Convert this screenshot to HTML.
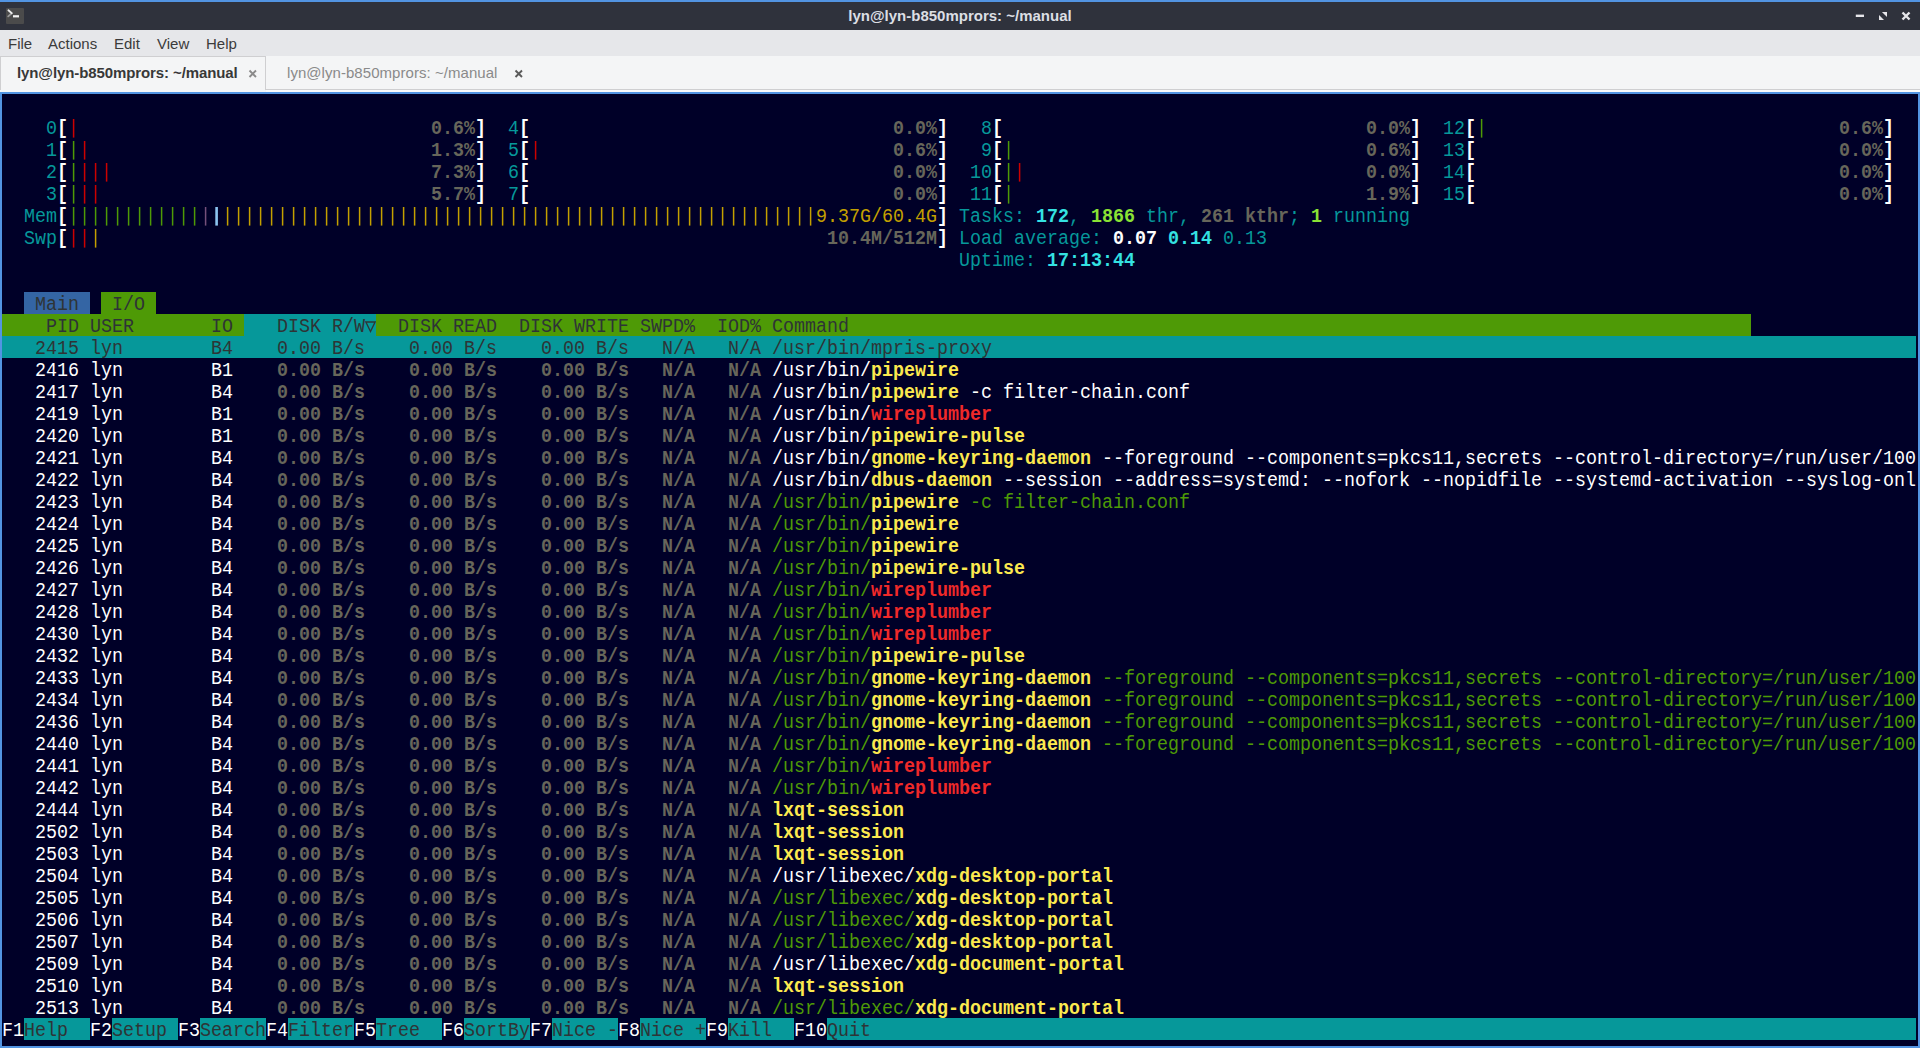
<!DOCTYPE html>
<html><head><meta charset="utf-8">
<style>
html,body{margin:0;padding:0;width:1920px;height:1048px;overflow:hidden;background:#5294e2;}
body{position:relative;font-family:"Liberation Sans",sans-serif;}
#title{position:absolute;left:0;top:2px;width:1920px;height:28px;background:#2f323c;}
#ttext{position:absolute;left:0;top:0;width:1920px;height:28px;line-height:28px;text-align:center;color:#dcdfe4;font-weight:bold;font-size:15px;}
#icon{position:absolute;left:6px;top:6px;width:18px;height:16px;background:#4b4b4b;border-radius:1px;}
#menu{position:absolute;left:0;top:30px;width:1920px;height:26px;background:#e6e7ea;}
.mi{position:absolute;top:0;height:26px;line-height:27px;font-size:15px;color:#3b3b3b;}
#tabs{position:absolute;left:0;top:56px;width:1920px;height:36px;background:#f4f5f6;}
#term{position:absolute;left:2px;top:94px;width:1916px;height:952px;background:#000028;}
#tw{position:absolute;left:0;top:0;width:1920px;height:1048px;font-family:"Liberation Mono",monospace;font-size:18.33px;}
#tw span{position:absolute;height:22px;line-height:22px;white-space:pre;transform:translateY(var(--dy)) scaleY(var(--sy));transform-origin:0 50%;}
#tw b{position:absolute;height:22px;}
#tw{--dy:2.5px;--sy:1.08}
#tw i{position:absolute;width:2px;height:18px;}
#tw i.bw{width:3px;left:0}
</style></head><body>
<div id="title">
  <div id="icon"><svg width="18" height="16" style="position:absolute;left:0;top:0"><path d="M2.2 8.4 L5.6 5.4" fill="none" stroke="#9a9a9a" stroke-width="1.8" stroke-linecap="round"/><path d="M2.4 2.3 L5.8 5.2" fill="none" stroke="#ececec" stroke-width="1.8" stroke-linecap="round"/><rect x="7" y="7.2" width="6" height="2.2" fill="#f4f4f4"/></svg></div>
  <div id="ttext">lyn@lyn-b850mprors: ~/manual</div>
  <svg style="position:absolute;left:1850px;top:0" width="70" height="28">
    <rect x="5.8" y="12.6" width="8.2" height="2.4" fill="#e6e6ea"/>
    <path d="M31.9 9.9 L37 9.9 L37 15 Z" fill="#e6e6ea"/>
    <path d="M29 13 L34 18 L29 18 Z" fill="#e6e6ea"/>
    <path d="M52.5 10.5 L59.5 17.5 M59.5 10.5 L52.5 17.5" stroke="#e6e6ea" stroke-width="2.4"/>
  </svg>
</div>
<div id="menu">
  <div class="mi" style="left:8px">File</div>
  <div class="mi" style="left:48px">Actions</div>
  <div class="mi" style="left:114px">Edit</div>
  <div class="mi" style="left:157px">View</div>
  <div class="mi" style="left:206px">Help</div>
</div>
<div id="tabs">
  <div style="position:absolute;left:0;top:34px;width:266px;height:2px;background:#f6f7f8"></div>
  <div style="position:absolute;left:0;top:0;width:266px;height:34px;background:#f4f5f6;border-top:1px solid #cfcfd1;border-left:1px solid #cfcfd1;border-right:1px solid #cfcfd1;box-sizing:border-box;border-bottom:0"></div>
  <div style="position:absolute;left:265px;top:33px;width:1655px;height:1px;background:#cfcfd1"></div>
  <div style="position:absolute;left:266px;top:34px;width:1654px;height:2px;background:#fbfbfb"></div>
  <div style="position:absolute;left:265px;top:34px;width:1px;height:2px;background:#f4f5f6"></div>
  <div style="position:absolute;left:17px;top:-1px;height:36px;line-height:36px;font-size:15px;font-weight:bold;color:#383838;letter-spacing:-0.1px">lyn@lyn-b850mprors: ~/manual</div>
  <svg style="position:absolute;left:240px;top:0" width="30" height="36"><path d="M9.5 14.5 L16 21 M16 14.5 L9.5 21" stroke="#8a8a8a" stroke-width="1.9"/></svg>
  <div style="position:absolute;left:287px;top:-1px;height:36px;line-height:36px;font-size:15px;color:#8a8a8a;letter-spacing:0.05px">lyn@lyn-b850mprors: ~/manual</div>
  <svg style="position:absolute;left:505px;top:0" width="30" height="36"><path d="M10.5 14.5 L17 21 M17 14.5 L10.5 21" stroke="#5a5a5a" stroke-width="1.9"/></svg>
</div>
<div id="term"></div>
<div id="tw">
<b style="left:24px;top:292px;width:66px;background:#3465a4"></b>
<b style="left:101px;top:292px;width:55px;background:#4e9a06"></b>
<b style="left:2px;top:314px;width:242px;background:#4e9a06"></b>
<b style="left:244px;top:314px;width:132px;background:#06989a"></b>
<b style="left:376px;top:314px;width:1375px;background:#4e9a06"></b>
<b style="left:2px;top:336px;width:1914px;background:#06989a"></b>
<b style="left:24px;top:1018px;width:66px;background:#06989a"></b>
<b style="left:112px;top:1018px;width:66px;background:#06989a"></b>
<b style="left:200px;top:1018px;width:66px;background:#06989a"></b>
<b style="left:288px;top:1018px;width:66px;background:#06989a"></b>
<b style="left:376px;top:1018px;width:66px;background:#06989a"></b>
<b style="left:464px;top:1018px;width:66px;background:#06989a"></b>
<b style="left:552px;top:1018px;width:66px;background:#06989a"></b>
<b style="left:640px;top:1018px;width:66px;background:#06989a"></b>
<b style="left:728px;top:1018px;width:66px;background:#06989a"></b>
<b style="left:827px;top:1018px;width:1089px;background:#06989a"></b>
<svg style="position:absolute;left:0;top:0" width="1920" height="300"><rect x="72.85" y="119" width="1.5" height="18.6" fill="#cc0000"/><rect x="72.85" y="141" width="1.5" height="18.6" fill="#4e9a06"/><rect x="83.85" y="141" width="1.5" height="18.6" fill="#cc0000"/><rect x="72.85" y="163" width="1.5" height="18.6" fill="#4e9a06"/><rect x="83.85" y="163" width="1.5" height="18.6" fill="#cc0000"/><rect x="94.85" y="163" width="1.5" height="18.6" fill="#cc0000"/><rect x="105.85" y="163" width="1.5" height="18.6" fill="#cc0000"/><rect x="72.85" y="185" width="1.5" height="18.6" fill="#4e9a06"/><rect x="83.85" y="185" width="1.5" height="18.6" fill="#cc0000"/><rect x="94.85" y="185" width="1.5" height="18.6" fill="#cc0000"/><rect x="534.85" y="141" width="1.5" height="18.6" fill="#cc0000"/><rect x="1007.85" y="141" width="1.5" height="18.6" fill="#4e9a06"/><rect x="1007.85" y="163" width="1.5" height="18.6" fill="#4e9a06"/><rect x="1018.85" y="163" width="1.5" height="18.6" fill="#cc0000"/><rect x="1007.85" y="185" width="1.5" height="18.6" fill="#4e9a06"/><rect x="1480.85" y="119" width="1.5" height="18.6" fill="#4e9a06"/><rect x="72.85" y="207" width="1.5" height="18.6" fill="#4e9a06"/><rect x="83.85" y="207" width="1.5" height="18.6" fill="#4e9a06"/><rect x="94.85" y="207" width="1.5" height="18.6" fill="#4e9a06"/><rect x="105.85" y="207" width="1.5" height="18.6" fill="#4e9a06"/><rect x="116.85" y="207" width="1.5" height="18.6" fill="#4e9a06"/><rect x="127.85" y="207" width="1.5" height="18.6" fill="#4e9a06"/><rect x="138.85" y="207" width="1.5" height="18.6" fill="#4e9a06"/><rect x="149.85" y="207" width="1.5" height="18.6" fill="#4e9a06"/><rect x="160.85" y="207" width="1.5" height="18.6" fill="#4e9a06"/><rect x="171.85" y="207" width="1.5" height="18.6" fill="#4e9a06"/><rect x="182.85" y="207" width="1.5" height="18.6" fill="#4e9a06"/><rect x="193.85" y="207" width="1.5" height="18.6" fill="#4e9a06"/><rect x="204.85" y="207" width="1.5" height="18.6" fill="#75507b"/><rect x="215.30" y="207" width="2.6" height="18.6" fill="#8cc4f0"/><rect x="226.85" y="207" width="1.5" height="18.6" fill="#c4a000"/><rect x="237.85" y="207" width="1.5" height="18.6" fill="#c4a000"/><rect x="248.85" y="207" width="1.5" height="18.6" fill="#c4a000"/><rect x="259.85" y="207" width="1.5" height="18.6" fill="#c4a000"/><rect x="270.85" y="207" width="1.5" height="18.6" fill="#c4a000"/><rect x="281.85" y="207" width="1.5" height="18.6" fill="#c4a000"/><rect x="292.85" y="207" width="1.5" height="18.6" fill="#c4a000"/><rect x="303.85" y="207" width="1.5" height="18.6" fill="#c4a000"/><rect x="314.85" y="207" width="1.5" height="18.6" fill="#c4a000"/><rect x="325.85" y="207" width="1.5" height="18.6" fill="#c4a000"/><rect x="336.85" y="207" width="1.5" height="18.6" fill="#c4a000"/><rect x="347.85" y="207" width="1.5" height="18.6" fill="#c4a000"/><rect x="358.85" y="207" width="1.5" height="18.6" fill="#c4a000"/><rect x="369.85" y="207" width="1.5" height="18.6" fill="#c4a000"/><rect x="380.85" y="207" width="1.5" height="18.6" fill="#c4a000"/><rect x="391.85" y="207" width="1.5" height="18.6" fill="#c4a000"/><rect x="402.85" y="207" width="1.5" height="18.6" fill="#c4a000"/><rect x="413.85" y="207" width="1.5" height="18.6" fill="#c4a000"/><rect x="424.85" y="207" width="1.5" height="18.6" fill="#c4a000"/><rect x="435.85" y="207" width="1.5" height="18.6" fill="#c4a000"/><rect x="446.85" y="207" width="1.5" height="18.6" fill="#c4a000"/><rect x="457.85" y="207" width="1.5" height="18.6" fill="#c4a000"/><rect x="468.85" y="207" width="1.5" height="18.6" fill="#c4a000"/><rect x="479.85" y="207" width="1.5" height="18.6" fill="#c4a000"/><rect x="490.85" y="207" width="1.5" height="18.6" fill="#c4a000"/><rect x="501.85" y="207" width="1.5" height="18.6" fill="#c4a000"/><rect x="512.85" y="207" width="1.5" height="18.6" fill="#c4a000"/><rect x="523.85" y="207" width="1.5" height="18.6" fill="#c4a000"/><rect x="534.85" y="207" width="1.5" height="18.6" fill="#c4a000"/><rect x="545.85" y="207" width="1.5" height="18.6" fill="#c4a000"/><rect x="556.85" y="207" width="1.5" height="18.6" fill="#c4a000"/><rect x="567.85" y="207" width="1.5" height="18.6" fill="#c4a000"/><rect x="578.85" y="207" width="1.5" height="18.6" fill="#c4a000"/><rect x="589.85" y="207" width="1.5" height="18.6" fill="#c4a000"/><rect x="600.85" y="207" width="1.5" height="18.6" fill="#c4a000"/><rect x="611.85" y="207" width="1.5" height="18.6" fill="#c4a000"/><rect x="622.85" y="207" width="1.5" height="18.6" fill="#c4a000"/><rect x="633.85" y="207" width="1.5" height="18.6" fill="#c4a000"/><rect x="644.85" y="207" width="1.5" height="18.6" fill="#c4a000"/><rect x="655.85" y="207" width="1.5" height="18.6" fill="#c4a000"/><rect x="666.85" y="207" width="1.5" height="18.6" fill="#c4a000"/><rect x="677.85" y="207" width="1.5" height="18.6" fill="#c4a000"/><rect x="688.85" y="207" width="1.5" height="18.6" fill="#c4a000"/><rect x="699.85" y="207" width="1.5" height="18.6" fill="#c4a000"/><rect x="710.85" y="207" width="1.5" height="18.6" fill="#c4a000"/><rect x="721.85" y="207" width="1.5" height="18.6" fill="#c4a000"/><rect x="732.85" y="207" width="1.5" height="18.6" fill="#c4a000"/><rect x="743.85" y="207" width="1.5" height="18.6" fill="#c4a000"/><rect x="754.85" y="207" width="1.5" height="18.6" fill="#c4a000"/><rect x="765.85" y="207" width="1.5" height="18.6" fill="#c4a000"/><rect x="776.85" y="207" width="1.5" height="18.6" fill="#c4a000"/><rect x="787.85" y="207" width="1.5" height="18.6" fill="#c4a000"/><rect x="798.85" y="207" width="1.5" height="18.6" fill="#c4a000"/><rect x="809.85" y="207" width="1.5" height="18.6" fill="#c4a000"/><rect x="72.85" y="229" width="1.5" height="18.6" fill="#cc0000"/><rect x="83.85" y="229" width="1.5" height="18.6" fill="#cc0000"/><rect x="94.85" y="229" width="1.5" height="18.6" fill="#c4a000"/></svg>
<span style="left:24px;top:116px;color:#06989a">  0</span>
<span style="left:57px;top:116px;color:#ffffff;font-weight:bold">[</span>
<span style="left:431px;top:116px;color:#67665a;font-weight:bold">0.6%</span>
<span style="left:475px;top:116px;color:#ffffff;font-weight:bold">]</span>
<span style="left:486px;top:116px;color:#06989a">  4</span>
<span style="left:519px;top:116px;color:#ffffff;font-weight:bold">[</span>
<span style="left:893px;top:116px;color:#67665a;font-weight:bold">0.0%</span>
<span style="left:937px;top:116px;color:#ffffff;font-weight:bold">]</span>
<span style="left:959px;top:116px;color:#06989a">  8</span>
<span style="left:992px;top:116px;color:#ffffff;font-weight:bold">[</span>
<span style="left:1366px;top:116px;color:#67665a;font-weight:bold">0.0%</span>
<span style="left:1410px;top:116px;color:#ffffff;font-weight:bold">]</span>
<span style="left:1432px;top:116px;color:#06989a"> 12</span>
<span style="left:1465px;top:116px;color:#ffffff;font-weight:bold">[</span>
<span style="left:1839px;top:116px;color:#67665a;font-weight:bold">0.6%</span>
<span style="left:1883px;top:116px;color:#ffffff;font-weight:bold">]</span>
<span style="left:24px;top:138px;color:#06989a">  1</span>
<span style="left:57px;top:138px;color:#ffffff;font-weight:bold">[</span>
<span style="left:431px;top:138px;color:#67665a;font-weight:bold">1.3%</span>
<span style="left:475px;top:138px;color:#ffffff;font-weight:bold">]</span>
<span style="left:486px;top:138px;color:#06989a">  5</span>
<span style="left:519px;top:138px;color:#ffffff;font-weight:bold">[</span>
<span style="left:893px;top:138px;color:#67665a;font-weight:bold">0.6%</span>
<span style="left:937px;top:138px;color:#ffffff;font-weight:bold">]</span>
<span style="left:959px;top:138px;color:#06989a">  9</span>
<span style="left:992px;top:138px;color:#ffffff;font-weight:bold">[</span>
<span style="left:1366px;top:138px;color:#67665a;font-weight:bold">0.6%</span>
<span style="left:1410px;top:138px;color:#ffffff;font-weight:bold">]</span>
<span style="left:1432px;top:138px;color:#06989a"> 13</span>
<span style="left:1465px;top:138px;color:#ffffff;font-weight:bold">[</span>
<span style="left:1839px;top:138px;color:#67665a;font-weight:bold">0.0%</span>
<span style="left:1883px;top:138px;color:#ffffff;font-weight:bold">]</span>
<span style="left:24px;top:160px;color:#06989a">  2</span>
<span style="left:57px;top:160px;color:#ffffff;font-weight:bold">[</span>
<span style="left:431px;top:160px;color:#67665a;font-weight:bold">7.3%</span>
<span style="left:475px;top:160px;color:#ffffff;font-weight:bold">]</span>
<span style="left:486px;top:160px;color:#06989a">  6</span>
<span style="left:519px;top:160px;color:#ffffff;font-weight:bold">[</span>
<span style="left:893px;top:160px;color:#67665a;font-weight:bold">0.0%</span>
<span style="left:937px;top:160px;color:#ffffff;font-weight:bold">]</span>
<span style="left:959px;top:160px;color:#06989a"> 10</span>
<span style="left:992px;top:160px;color:#ffffff;font-weight:bold">[</span>
<span style="left:1366px;top:160px;color:#67665a;font-weight:bold">0.0%</span>
<span style="left:1410px;top:160px;color:#ffffff;font-weight:bold">]</span>
<span style="left:1432px;top:160px;color:#06989a"> 14</span>
<span style="left:1465px;top:160px;color:#ffffff;font-weight:bold">[</span>
<span style="left:1839px;top:160px;color:#67665a;font-weight:bold">0.0%</span>
<span style="left:1883px;top:160px;color:#ffffff;font-weight:bold">]</span>
<span style="left:24px;top:182px;color:#06989a">  3</span>
<span style="left:57px;top:182px;color:#ffffff;font-weight:bold">[</span>
<span style="left:431px;top:182px;color:#67665a;font-weight:bold">5.7%</span>
<span style="left:475px;top:182px;color:#ffffff;font-weight:bold">]</span>
<span style="left:486px;top:182px;color:#06989a">  7</span>
<span style="left:519px;top:182px;color:#ffffff;font-weight:bold">[</span>
<span style="left:893px;top:182px;color:#67665a;font-weight:bold">0.0%</span>
<span style="left:937px;top:182px;color:#ffffff;font-weight:bold">]</span>
<span style="left:959px;top:182px;color:#06989a"> 11</span>
<span style="left:992px;top:182px;color:#ffffff;font-weight:bold">[</span>
<span style="left:1366px;top:182px;color:#67665a;font-weight:bold">1.9%</span>
<span style="left:1410px;top:182px;color:#ffffff;font-weight:bold">]</span>
<span style="left:1432px;top:182px;color:#06989a"> 15</span>
<span style="left:1465px;top:182px;color:#ffffff;font-weight:bold">[</span>
<span style="left:1839px;top:182px;color:#67665a;font-weight:bold">0.0%</span>
<span style="left:1883px;top:182px;color:#ffffff;font-weight:bold">]</span>
<span style="left:24px;top:204px;color:#06989a">Mem</span>
<span style="left:57px;top:204px;color:#ffffff;font-weight:bold">[</span>
<span style="left:816px;top:204px;color:#c4a000">9.37G/60.4G</span>
<span style="left:937px;top:204px;color:#ffffff;font-weight:bold">]</span>
<span style="left:959px;top:204px;color:#06989a">Tasks:</span>
<span style="left:1036px;top:204px;color:#34e2e2;font-weight:bold">172</span>
<span style="left:1069px;top:204px;color:#06989a">,</span>
<span style="left:1091px;top:204px;color:#8ae234;font-weight:bold">1866</span>
<span style="left:1135px;top:204px;color:#06989a"> thr,</span>
<span style="left:1201px;top:204px;color:#67665a;font-weight:bold">261</span>
<span style="left:1234px;top:204px;color:#67665a;font-weight:bold"> kthr</span>
<span style="left:1289px;top:204px;color:#06989a">;</span>
<span style="left:1311px;top:204px;color:#8ae234;font-weight:bold">1</span>
<span style="left:1322px;top:204px;color:#06989a"> running</span>
<span style="left:24px;top:226px;color:#06989a">Swp</span>
<span style="left:57px;top:226px;color:#ffffff;font-weight:bold">[</span>
<span style="left:827px;top:226px;color:#67665a;font-weight:bold">10.4M/512M</span>
<span style="left:937px;top:226px;color:#ffffff;font-weight:bold">]</span>
<span style="left:959px;top:226px;color:#06989a">Load average:</span>
<span style="left:1113px;top:226px;color:#ffffff;font-weight:bold">0.07</span>
<span style="left:1168px;top:226px;color:#34e2e2;font-weight:bold">0.14</span>
<span style="left:1223px;top:226px;color:#06989a">0.13</span>
<span style="left:959px;top:248px;color:#06989a">Uptime:</span>
<span style="left:1047px;top:248px;color:#34e2e2;font-weight:bold">17:13:44</span>
<span style="left:24px;top:292px;color:#2e3436"> Main</span>
<span style="left:101px;top:292px;color:#2e3436"> I/O</span>
<span style="left:2px;top:314px;color:#2e3436">    PID USER       IO</span>
<span style="left:244px;top:314px;color:#2e3436">   DISK R/W</span>
<span style="left:376px;top:314px;color:#2e3436">  DISK READ  DISK WRITE SWPD%  IOD% Command</span>
<span style="left:2px;top:336px;color:#2e3436">   2415 lyn        B4    0.00 B/s    0.00 B/s    0.00 B/s   N/A   N/A /usr/bin/mpris-proxy</span>
<span style="left:2px;top:358px;color:#ffffff">   2416 lyn</span>
<span style="left:211px;top:358px;color:#ffffff">B1</span>
<span style="left:277px;top:358px;color:#67665a;font-weight:bold">0.00 B/s</span>
<span style="left:409px;top:358px;color:#67665a;font-weight:bold">0.00 B/s</span>
<span style="left:541px;top:358px;color:#67665a;font-weight:bold">0.00 B/s</span>
<span style="left:662px;top:358px;color:#67665a;font-weight:bold">N/A</span>
<span style="left:728px;top:358px;color:#67665a;font-weight:bold">N/A</span>
<span style="left:772px;top:358px;color:#ffffff">/usr/bin/</span>
<span style="left:871px;top:358px;color:#fce94f;font-weight:bold">pipewire</span>
<span style="left:2px;top:380px;color:#ffffff">   2417 lyn</span>
<span style="left:211px;top:380px;color:#ffffff">B4</span>
<span style="left:277px;top:380px;color:#67665a;font-weight:bold">0.00 B/s</span>
<span style="left:409px;top:380px;color:#67665a;font-weight:bold">0.00 B/s</span>
<span style="left:541px;top:380px;color:#67665a;font-weight:bold">0.00 B/s</span>
<span style="left:662px;top:380px;color:#67665a;font-weight:bold">N/A</span>
<span style="left:728px;top:380px;color:#67665a;font-weight:bold">N/A</span>
<span style="left:772px;top:380px;color:#ffffff">/usr/bin/</span>
<span style="left:871px;top:380px;color:#fce94f;font-weight:bold">pipewire</span>
<span style="left:959px;top:380px;color:#ffffff"> -c filter-chain.conf</span>
<span style="left:2px;top:402px;color:#ffffff">   2419 lyn</span>
<span style="left:211px;top:402px;color:#ffffff">B1</span>
<span style="left:277px;top:402px;color:#67665a;font-weight:bold">0.00 B/s</span>
<span style="left:409px;top:402px;color:#67665a;font-weight:bold">0.00 B/s</span>
<span style="left:541px;top:402px;color:#67665a;font-weight:bold">0.00 B/s</span>
<span style="left:662px;top:402px;color:#67665a;font-weight:bold">N/A</span>
<span style="left:728px;top:402px;color:#67665a;font-weight:bold">N/A</span>
<span style="left:772px;top:402px;color:#ffffff">/usr/bin/</span>
<span style="left:871px;top:402px;color:#ef2929;font-weight:bold">wireplumber</span>
<span style="left:2px;top:424px;color:#ffffff">   2420 lyn</span>
<span style="left:211px;top:424px;color:#ffffff">B1</span>
<span style="left:277px;top:424px;color:#67665a;font-weight:bold">0.00 B/s</span>
<span style="left:409px;top:424px;color:#67665a;font-weight:bold">0.00 B/s</span>
<span style="left:541px;top:424px;color:#67665a;font-weight:bold">0.00 B/s</span>
<span style="left:662px;top:424px;color:#67665a;font-weight:bold">N/A</span>
<span style="left:728px;top:424px;color:#67665a;font-weight:bold">N/A</span>
<span style="left:772px;top:424px;color:#ffffff">/usr/bin/</span>
<span style="left:871px;top:424px;color:#fce94f;font-weight:bold">pipewire-pulse</span>
<span style="left:2px;top:446px;color:#ffffff">   2421 lyn</span>
<span style="left:211px;top:446px;color:#ffffff">B4</span>
<span style="left:277px;top:446px;color:#67665a;font-weight:bold">0.00 B/s</span>
<span style="left:409px;top:446px;color:#67665a;font-weight:bold">0.00 B/s</span>
<span style="left:541px;top:446px;color:#67665a;font-weight:bold">0.00 B/s</span>
<span style="left:662px;top:446px;color:#67665a;font-weight:bold">N/A</span>
<span style="left:728px;top:446px;color:#67665a;font-weight:bold">N/A</span>
<span style="left:772px;top:446px;color:#ffffff">/usr/bin/</span>
<span style="left:871px;top:446px;color:#fce94f;font-weight:bold">gnome-keyring-daemon</span>
<span style="left:1091px;top:446px;color:#ffffff"> --foreground --components=pkcs11,secrets --control-directory=/run/user/100</span>
<span style="left:2px;top:468px;color:#ffffff">   2422 lyn</span>
<span style="left:211px;top:468px;color:#ffffff">B4</span>
<span style="left:277px;top:468px;color:#67665a;font-weight:bold">0.00 B/s</span>
<span style="left:409px;top:468px;color:#67665a;font-weight:bold">0.00 B/s</span>
<span style="left:541px;top:468px;color:#67665a;font-weight:bold">0.00 B/s</span>
<span style="left:662px;top:468px;color:#67665a;font-weight:bold">N/A</span>
<span style="left:728px;top:468px;color:#67665a;font-weight:bold">N/A</span>
<span style="left:772px;top:468px;color:#ffffff">/usr/bin/</span>
<span style="left:871px;top:468px;color:#fce94f;font-weight:bold">dbus-daemon</span>
<span style="left:992px;top:468px;color:#ffffff"> --session --address=systemd: --nofork --nopidfile --systemd-activation --syslog-onl</span>
<span style="left:2px;top:490px;color:#ffffff">   2423 lyn</span>
<span style="left:211px;top:490px;color:#ffffff">B4</span>
<span style="left:277px;top:490px;color:#67665a;font-weight:bold">0.00 B/s</span>
<span style="left:409px;top:490px;color:#67665a;font-weight:bold">0.00 B/s</span>
<span style="left:541px;top:490px;color:#67665a;font-weight:bold">0.00 B/s</span>
<span style="left:662px;top:490px;color:#67665a;font-weight:bold">N/A</span>
<span style="left:728px;top:490px;color:#67665a;font-weight:bold">N/A</span>
<span style="left:772px;top:490px;color:#4e9a06">/usr/bin/</span>
<span style="left:871px;top:490px;color:#fce94f;font-weight:bold">pipewire</span>
<span style="left:959px;top:490px;color:#4e9a06"> -c filter-chain.conf</span>
<span style="left:2px;top:512px;color:#ffffff">   2424 lyn</span>
<span style="left:211px;top:512px;color:#ffffff">B4</span>
<span style="left:277px;top:512px;color:#67665a;font-weight:bold">0.00 B/s</span>
<span style="left:409px;top:512px;color:#67665a;font-weight:bold">0.00 B/s</span>
<span style="left:541px;top:512px;color:#67665a;font-weight:bold">0.00 B/s</span>
<span style="left:662px;top:512px;color:#67665a;font-weight:bold">N/A</span>
<span style="left:728px;top:512px;color:#67665a;font-weight:bold">N/A</span>
<span style="left:772px;top:512px;color:#4e9a06">/usr/bin/</span>
<span style="left:871px;top:512px;color:#fce94f;font-weight:bold">pipewire</span>
<span style="left:2px;top:534px;color:#ffffff">   2425 lyn</span>
<span style="left:211px;top:534px;color:#ffffff">B4</span>
<span style="left:277px;top:534px;color:#67665a;font-weight:bold">0.00 B/s</span>
<span style="left:409px;top:534px;color:#67665a;font-weight:bold">0.00 B/s</span>
<span style="left:541px;top:534px;color:#67665a;font-weight:bold">0.00 B/s</span>
<span style="left:662px;top:534px;color:#67665a;font-weight:bold">N/A</span>
<span style="left:728px;top:534px;color:#67665a;font-weight:bold">N/A</span>
<span style="left:772px;top:534px;color:#4e9a06">/usr/bin/</span>
<span style="left:871px;top:534px;color:#fce94f;font-weight:bold">pipewire</span>
<span style="left:2px;top:556px;color:#ffffff">   2426 lyn</span>
<span style="left:211px;top:556px;color:#ffffff">B4</span>
<span style="left:277px;top:556px;color:#67665a;font-weight:bold">0.00 B/s</span>
<span style="left:409px;top:556px;color:#67665a;font-weight:bold">0.00 B/s</span>
<span style="left:541px;top:556px;color:#67665a;font-weight:bold">0.00 B/s</span>
<span style="left:662px;top:556px;color:#67665a;font-weight:bold">N/A</span>
<span style="left:728px;top:556px;color:#67665a;font-weight:bold">N/A</span>
<span style="left:772px;top:556px;color:#4e9a06">/usr/bin/</span>
<span style="left:871px;top:556px;color:#fce94f;font-weight:bold">pipewire-pulse</span>
<span style="left:2px;top:578px;color:#ffffff">   2427 lyn</span>
<span style="left:211px;top:578px;color:#ffffff">B4</span>
<span style="left:277px;top:578px;color:#67665a;font-weight:bold">0.00 B/s</span>
<span style="left:409px;top:578px;color:#67665a;font-weight:bold">0.00 B/s</span>
<span style="left:541px;top:578px;color:#67665a;font-weight:bold">0.00 B/s</span>
<span style="left:662px;top:578px;color:#67665a;font-weight:bold">N/A</span>
<span style="left:728px;top:578px;color:#67665a;font-weight:bold">N/A</span>
<span style="left:772px;top:578px;color:#4e9a06">/usr/bin/</span>
<span style="left:871px;top:578px;color:#ef2929;font-weight:bold">wireplumber</span>
<span style="left:2px;top:600px;color:#ffffff">   2428 lyn</span>
<span style="left:211px;top:600px;color:#ffffff">B4</span>
<span style="left:277px;top:600px;color:#67665a;font-weight:bold">0.00 B/s</span>
<span style="left:409px;top:600px;color:#67665a;font-weight:bold">0.00 B/s</span>
<span style="left:541px;top:600px;color:#67665a;font-weight:bold">0.00 B/s</span>
<span style="left:662px;top:600px;color:#67665a;font-weight:bold">N/A</span>
<span style="left:728px;top:600px;color:#67665a;font-weight:bold">N/A</span>
<span style="left:772px;top:600px;color:#4e9a06">/usr/bin/</span>
<span style="left:871px;top:600px;color:#ef2929;font-weight:bold">wireplumber</span>
<span style="left:2px;top:622px;color:#ffffff">   2430 lyn</span>
<span style="left:211px;top:622px;color:#ffffff">B4</span>
<span style="left:277px;top:622px;color:#67665a;font-weight:bold">0.00 B/s</span>
<span style="left:409px;top:622px;color:#67665a;font-weight:bold">0.00 B/s</span>
<span style="left:541px;top:622px;color:#67665a;font-weight:bold">0.00 B/s</span>
<span style="left:662px;top:622px;color:#67665a;font-weight:bold">N/A</span>
<span style="left:728px;top:622px;color:#67665a;font-weight:bold">N/A</span>
<span style="left:772px;top:622px;color:#4e9a06">/usr/bin/</span>
<span style="left:871px;top:622px;color:#ef2929;font-weight:bold">wireplumber</span>
<span style="left:2px;top:644px;color:#ffffff">   2432 lyn</span>
<span style="left:211px;top:644px;color:#ffffff">B4</span>
<span style="left:277px;top:644px;color:#67665a;font-weight:bold">0.00 B/s</span>
<span style="left:409px;top:644px;color:#67665a;font-weight:bold">0.00 B/s</span>
<span style="left:541px;top:644px;color:#67665a;font-weight:bold">0.00 B/s</span>
<span style="left:662px;top:644px;color:#67665a;font-weight:bold">N/A</span>
<span style="left:728px;top:644px;color:#67665a;font-weight:bold">N/A</span>
<span style="left:772px;top:644px;color:#4e9a06">/usr/bin/</span>
<span style="left:871px;top:644px;color:#fce94f;font-weight:bold">pipewire-pulse</span>
<span style="left:2px;top:666px;color:#ffffff">   2433 lyn</span>
<span style="left:211px;top:666px;color:#ffffff">B4</span>
<span style="left:277px;top:666px;color:#67665a;font-weight:bold">0.00 B/s</span>
<span style="left:409px;top:666px;color:#67665a;font-weight:bold">0.00 B/s</span>
<span style="left:541px;top:666px;color:#67665a;font-weight:bold">0.00 B/s</span>
<span style="left:662px;top:666px;color:#67665a;font-weight:bold">N/A</span>
<span style="left:728px;top:666px;color:#67665a;font-weight:bold">N/A</span>
<span style="left:772px;top:666px;color:#4e9a06">/usr/bin/</span>
<span style="left:871px;top:666px;color:#fce94f;font-weight:bold">gnome-keyring-daemon</span>
<span style="left:1091px;top:666px;color:#4e9a06"> --foreground --components=pkcs11,secrets --control-directory=/run/user/100</span>
<span style="left:2px;top:688px;color:#ffffff">   2434 lyn</span>
<span style="left:211px;top:688px;color:#ffffff">B4</span>
<span style="left:277px;top:688px;color:#67665a;font-weight:bold">0.00 B/s</span>
<span style="left:409px;top:688px;color:#67665a;font-weight:bold">0.00 B/s</span>
<span style="left:541px;top:688px;color:#67665a;font-weight:bold">0.00 B/s</span>
<span style="left:662px;top:688px;color:#67665a;font-weight:bold">N/A</span>
<span style="left:728px;top:688px;color:#67665a;font-weight:bold">N/A</span>
<span style="left:772px;top:688px;color:#4e9a06">/usr/bin/</span>
<span style="left:871px;top:688px;color:#fce94f;font-weight:bold">gnome-keyring-daemon</span>
<span style="left:1091px;top:688px;color:#4e9a06"> --foreground --components=pkcs11,secrets --control-directory=/run/user/100</span>
<span style="left:2px;top:710px;color:#ffffff">   2436 lyn</span>
<span style="left:211px;top:710px;color:#ffffff">B4</span>
<span style="left:277px;top:710px;color:#67665a;font-weight:bold">0.00 B/s</span>
<span style="left:409px;top:710px;color:#67665a;font-weight:bold">0.00 B/s</span>
<span style="left:541px;top:710px;color:#67665a;font-weight:bold">0.00 B/s</span>
<span style="left:662px;top:710px;color:#67665a;font-weight:bold">N/A</span>
<span style="left:728px;top:710px;color:#67665a;font-weight:bold">N/A</span>
<span style="left:772px;top:710px;color:#4e9a06">/usr/bin/</span>
<span style="left:871px;top:710px;color:#fce94f;font-weight:bold">gnome-keyring-daemon</span>
<span style="left:1091px;top:710px;color:#4e9a06"> --foreground --components=pkcs11,secrets --control-directory=/run/user/100</span>
<span style="left:2px;top:732px;color:#ffffff">   2440 lyn</span>
<span style="left:211px;top:732px;color:#ffffff">B4</span>
<span style="left:277px;top:732px;color:#67665a;font-weight:bold">0.00 B/s</span>
<span style="left:409px;top:732px;color:#67665a;font-weight:bold">0.00 B/s</span>
<span style="left:541px;top:732px;color:#67665a;font-weight:bold">0.00 B/s</span>
<span style="left:662px;top:732px;color:#67665a;font-weight:bold">N/A</span>
<span style="left:728px;top:732px;color:#67665a;font-weight:bold">N/A</span>
<span style="left:772px;top:732px;color:#4e9a06">/usr/bin/</span>
<span style="left:871px;top:732px;color:#fce94f;font-weight:bold">gnome-keyring-daemon</span>
<span style="left:1091px;top:732px;color:#4e9a06"> --foreground --components=pkcs11,secrets --control-directory=/run/user/100</span>
<span style="left:2px;top:754px;color:#ffffff">   2441 lyn</span>
<span style="left:211px;top:754px;color:#ffffff">B4</span>
<span style="left:277px;top:754px;color:#67665a;font-weight:bold">0.00 B/s</span>
<span style="left:409px;top:754px;color:#67665a;font-weight:bold">0.00 B/s</span>
<span style="left:541px;top:754px;color:#67665a;font-weight:bold">0.00 B/s</span>
<span style="left:662px;top:754px;color:#67665a;font-weight:bold">N/A</span>
<span style="left:728px;top:754px;color:#67665a;font-weight:bold">N/A</span>
<span style="left:772px;top:754px;color:#4e9a06">/usr/bin/</span>
<span style="left:871px;top:754px;color:#ef2929;font-weight:bold">wireplumber</span>
<span style="left:2px;top:776px;color:#ffffff">   2442 lyn</span>
<span style="left:211px;top:776px;color:#ffffff">B4</span>
<span style="left:277px;top:776px;color:#67665a;font-weight:bold">0.00 B/s</span>
<span style="left:409px;top:776px;color:#67665a;font-weight:bold">0.00 B/s</span>
<span style="left:541px;top:776px;color:#67665a;font-weight:bold">0.00 B/s</span>
<span style="left:662px;top:776px;color:#67665a;font-weight:bold">N/A</span>
<span style="left:728px;top:776px;color:#67665a;font-weight:bold">N/A</span>
<span style="left:772px;top:776px;color:#4e9a06">/usr/bin/</span>
<span style="left:871px;top:776px;color:#ef2929;font-weight:bold">wireplumber</span>
<span style="left:2px;top:798px;color:#ffffff">   2444 lyn</span>
<span style="left:211px;top:798px;color:#ffffff">B4</span>
<span style="left:277px;top:798px;color:#67665a;font-weight:bold">0.00 B/s</span>
<span style="left:409px;top:798px;color:#67665a;font-weight:bold">0.00 B/s</span>
<span style="left:541px;top:798px;color:#67665a;font-weight:bold">0.00 B/s</span>
<span style="left:662px;top:798px;color:#67665a;font-weight:bold">N/A</span>
<span style="left:728px;top:798px;color:#67665a;font-weight:bold">N/A</span>
<span style="left:772px;top:798px;color:#fce94f;font-weight:bold">lxqt-session</span>
<span style="left:2px;top:820px;color:#ffffff">   2502 lyn</span>
<span style="left:211px;top:820px;color:#ffffff">B4</span>
<span style="left:277px;top:820px;color:#67665a;font-weight:bold">0.00 B/s</span>
<span style="left:409px;top:820px;color:#67665a;font-weight:bold">0.00 B/s</span>
<span style="left:541px;top:820px;color:#67665a;font-weight:bold">0.00 B/s</span>
<span style="left:662px;top:820px;color:#67665a;font-weight:bold">N/A</span>
<span style="left:728px;top:820px;color:#67665a;font-weight:bold">N/A</span>
<span style="left:772px;top:820px;color:#fce94f;font-weight:bold">lxqt-session</span>
<span style="left:2px;top:842px;color:#ffffff">   2503 lyn</span>
<span style="left:211px;top:842px;color:#ffffff">B4</span>
<span style="left:277px;top:842px;color:#67665a;font-weight:bold">0.00 B/s</span>
<span style="left:409px;top:842px;color:#67665a;font-weight:bold">0.00 B/s</span>
<span style="left:541px;top:842px;color:#67665a;font-weight:bold">0.00 B/s</span>
<span style="left:662px;top:842px;color:#67665a;font-weight:bold">N/A</span>
<span style="left:728px;top:842px;color:#67665a;font-weight:bold">N/A</span>
<span style="left:772px;top:842px;color:#fce94f;font-weight:bold">lxqt-session</span>
<span style="left:2px;top:864px;color:#ffffff">   2504 lyn</span>
<span style="left:211px;top:864px;color:#ffffff">B4</span>
<span style="left:277px;top:864px;color:#67665a;font-weight:bold">0.00 B/s</span>
<span style="left:409px;top:864px;color:#67665a;font-weight:bold">0.00 B/s</span>
<span style="left:541px;top:864px;color:#67665a;font-weight:bold">0.00 B/s</span>
<span style="left:662px;top:864px;color:#67665a;font-weight:bold">N/A</span>
<span style="left:728px;top:864px;color:#67665a;font-weight:bold">N/A</span>
<span style="left:772px;top:864px;color:#ffffff">/usr/libexec/</span>
<span style="left:915px;top:864px;color:#fce94f;font-weight:bold">xdg-desktop-portal</span>
<span style="left:2px;top:886px;color:#ffffff">   2505 lyn</span>
<span style="left:211px;top:886px;color:#ffffff">B4</span>
<span style="left:277px;top:886px;color:#67665a;font-weight:bold">0.00 B/s</span>
<span style="left:409px;top:886px;color:#67665a;font-weight:bold">0.00 B/s</span>
<span style="left:541px;top:886px;color:#67665a;font-weight:bold">0.00 B/s</span>
<span style="left:662px;top:886px;color:#67665a;font-weight:bold">N/A</span>
<span style="left:728px;top:886px;color:#67665a;font-weight:bold">N/A</span>
<span style="left:772px;top:886px;color:#4e9a06">/usr/libexec/</span>
<span style="left:915px;top:886px;color:#fce94f;font-weight:bold">xdg-desktop-portal</span>
<span style="left:2px;top:908px;color:#ffffff">   2506 lyn</span>
<span style="left:211px;top:908px;color:#ffffff">B4</span>
<span style="left:277px;top:908px;color:#67665a;font-weight:bold">0.00 B/s</span>
<span style="left:409px;top:908px;color:#67665a;font-weight:bold">0.00 B/s</span>
<span style="left:541px;top:908px;color:#67665a;font-weight:bold">0.00 B/s</span>
<span style="left:662px;top:908px;color:#67665a;font-weight:bold">N/A</span>
<span style="left:728px;top:908px;color:#67665a;font-weight:bold">N/A</span>
<span style="left:772px;top:908px;color:#4e9a06">/usr/libexec/</span>
<span style="left:915px;top:908px;color:#fce94f;font-weight:bold">xdg-desktop-portal</span>
<span style="left:2px;top:930px;color:#ffffff">   2507 lyn</span>
<span style="left:211px;top:930px;color:#ffffff">B4</span>
<span style="left:277px;top:930px;color:#67665a;font-weight:bold">0.00 B/s</span>
<span style="left:409px;top:930px;color:#67665a;font-weight:bold">0.00 B/s</span>
<span style="left:541px;top:930px;color:#67665a;font-weight:bold">0.00 B/s</span>
<span style="left:662px;top:930px;color:#67665a;font-weight:bold">N/A</span>
<span style="left:728px;top:930px;color:#67665a;font-weight:bold">N/A</span>
<span style="left:772px;top:930px;color:#4e9a06">/usr/libexec/</span>
<span style="left:915px;top:930px;color:#fce94f;font-weight:bold">xdg-desktop-portal</span>
<span style="left:2px;top:952px;color:#ffffff">   2509 lyn</span>
<span style="left:211px;top:952px;color:#ffffff">B4</span>
<span style="left:277px;top:952px;color:#67665a;font-weight:bold">0.00 B/s</span>
<span style="left:409px;top:952px;color:#67665a;font-weight:bold">0.00 B/s</span>
<span style="left:541px;top:952px;color:#67665a;font-weight:bold">0.00 B/s</span>
<span style="left:662px;top:952px;color:#67665a;font-weight:bold">N/A</span>
<span style="left:728px;top:952px;color:#67665a;font-weight:bold">N/A</span>
<span style="left:772px;top:952px;color:#ffffff">/usr/libexec/</span>
<span style="left:915px;top:952px;color:#fce94f;font-weight:bold">xdg-document-portal</span>
<span style="left:2px;top:974px;color:#ffffff">   2510 lyn</span>
<span style="left:211px;top:974px;color:#ffffff">B4</span>
<span style="left:277px;top:974px;color:#67665a;font-weight:bold">0.00 B/s</span>
<span style="left:409px;top:974px;color:#67665a;font-weight:bold">0.00 B/s</span>
<span style="left:541px;top:974px;color:#67665a;font-weight:bold">0.00 B/s</span>
<span style="left:662px;top:974px;color:#67665a;font-weight:bold">N/A</span>
<span style="left:728px;top:974px;color:#67665a;font-weight:bold">N/A</span>
<span style="left:772px;top:974px;color:#fce94f;font-weight:bold">lxqt-session</span>
<span style="left:2px;top:996px;color:#ffffff">   2513 lyn</span>
<span style="left:211px;top:996px;color:#ffffff">B4</span>
<span style="left:277px;top:996px;color:#67665a;font-weight:bold">0.00 B/s</span>
<span style="left:409px;top:996px;color:#67665a;font-weight:bold">0.00 B/s</span>
<span style="left:541px;top:996px;color:#67665a;font-weight:bold">0.00 B/s</span>
<span style="left:662px;top:996px;color:#67665a;font-weight:bold">N/A</span>
<span style="left:728px;top:996px;color:#67665a;font-weight:bold">N/A</span>
<span style="left:772px;top:996px;color:#4e9a06">/usr/libexec/</span>
<span style="left:915px;top:996px;color:#fce94f;font-weight:bold">xdg-document-portal</span>
<span style="left:2px;top:1018px;color:#ffffff">F1</span>
<span style="left:24px;top:1018px;color:#2e3436">Help</span>
<span style="left:90px;top:1018px;color:#ffffff">F2</span>
<span style="left:112px;top:1018px;color:#2e3436">Setup</span>
<span style="left:178px;top:1018px;color:#ffffff">F3</span>
<span style="left:200px;top:1018px;color:#2e3436">Search</span>
<span style="left:266px;top:1018px;color:#ffffff">F4</span>
<span style="left:288px;top:1018px;color:#2e3436">Filter</span>
<span style="left:354px;top:1018px;color:#ffffff">F5</span>
<span style="left:376px;top:1018px;color:#2e3436">Tree</span>
<span style="left:442px;top:1018px;color:#ffffff">F6</span>
<span style="left:464px;top:1018px;color:#2e3436">SortBy</span>
<span style="left:530px;top:1018px;color:#ffffff">F7</span>
<span style="left:552px;top:1018px;color:#2e3436">Nice -</span>
<span style="left:618px;top:1018px;color:#ffffff">F8</span>
<span style="left:640px;top:1018px;color:#2e3436">Nice +</span>
<span style="left:706px;top:1018px;color:#ffffff">F9</span>
<span style="left:728px;top:1018px;color:#2e3436">Kill</span>
<span style="left:794px;top:1018px;color:#ffffff">F10</span>
<span style="left:827px;top:1018px;color:#2e3436">Quit</span>
<svg style="position:absolute;left:365px;top:314px" width="11" height="22"><path d="M0.9 8 L10.1 8 L5.5 17.6 Z" fill="none" stroke="#2e3436" stroke-width="1.3"/></svg>
</div>
</body></html>
